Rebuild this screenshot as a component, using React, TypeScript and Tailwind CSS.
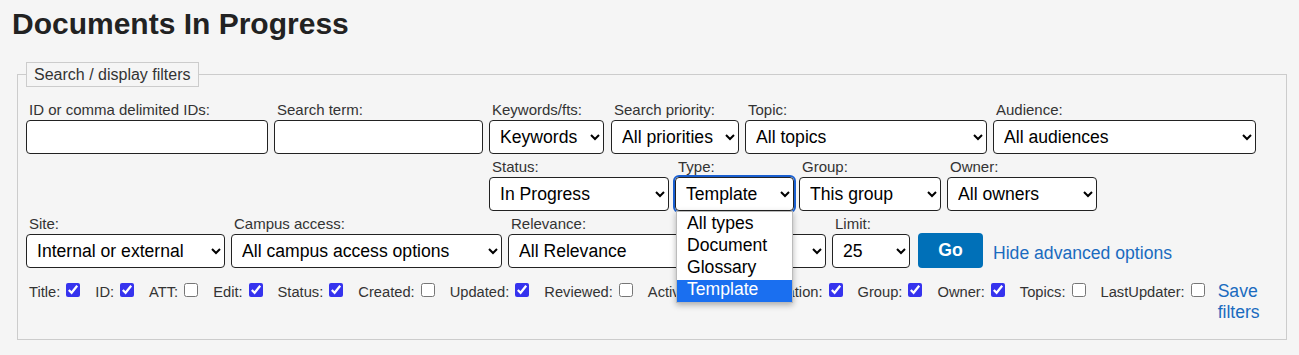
import React from "react";
import clsx from "clsx";

type FieldProps = { label: string; className?: string; children: React.ReactNode };

function Field({ label, className, children }: FieldProps) {
  return (
    <div className={clsx("flex flex-col", className)}>
      <span className="h-[20px] pl-[3px] leading-[20px] text-[15px] text-[#333] whitespace-nowrap">{label}</span>
      {children}
    </div>
  );
}

function Select({ className, options, value }: { className: string; options: string[]; value?: string }) {
  return (
    <select
      defaultValue={value ?? options[0]}
      className={clsx(
        "h-[34px] rounded-[4px] border border-[#222] bg-white pl-[6px] text-[17.6px] text-black",
        className
      )}
    >
      {options.map((o) => (
        <option key={o}>{o}</option>
      ))}
    </select>
  );
}

const columns: [string, boolean][] = [
  ["Title:", true],
  ["ID:", true],
  ["ATT:", false],
  ["Edit:", true],
  ["Status:", true],
  ["Created:", false],
  ["Updated:", true],
  ["Reviewed:", false],
  ["Active:", false],
  ["Classification:", true],
  ["Group:", true],
  ["Owner:", true],
  ["Topics:", false],
  ["LastUpdater:", false],
];

export default function App() {
  return (
    <div className="min-h-[355px] bg-[#f5f5f5] pt-[6px] font-['Liberation_Sans',Arial,sans-serif] text-[#333]">
      <h1 className="pl-[12px] text-[30px] leading-[36px] font-bold text-[#222]">Documents In Progress</h1>

      <fieldset className="mt-[20px] ml-[17px] mr-[14px] border border-[#ccc] px-[8px] pt-[13px] pb-[16px]">
        <legend className="h-[25px] border border-[#ccc] px-[7px] text-[16px] leading-[23px] text-[#333]">
          Search / display filters
        </legend>

        {/* row 1 */}
        <div className="flex gap-[6px]">
          <Field label="ID or comma delimited IDs:">
            <input className="h-[34px] w-[242px] rounded-[4px] border border-[#222] bg-white" />
          </Field>
          <Field label="Search term:">
            <input className="h-[34px] w-[209px] rounded-[4px] border border-[#222] bg-white" />
          </Field>
          <Field label="Keywords/fts:">
            <Select className="w-[115px]" options={["Keywords", "Full text"]} />
          </Field>
          <Field label="Search priority:" className="ml-[1px]">
            <Select className="w-[128px]" options={["All priorities", "High", "Low"]} />
          </Field>
          <Field label="Topic:">
            <Select className="w-[242px]" options={["All topics"]} />
          </Field>
          <Field label="Audience:">
            <Select className="w-[263px]" options={["All audiences"]} />
          </Field>
        </div>

        {/* row 2 */}
        <div className="mt-[3px] flex pl-[463px]">
          <Field label="Status:">
            <Select className="w-[180px]" options={["In Progress", "Published", "Retired"]} />
          </Field>
          <Field label="Type:" className="relative ml-[6px]">
            <Select
              className="w-[119px] outline-2 outline-[#1a5fd0]"
              options={["All types", "Document", "Glossary", "Template"]}
              value="Template"
            />
            <div className="absolute top-full left-[1px] z-10 w-[117px] border border-[#bbb] bg-white pt-[2px] text-[17.6px] text-black shadow-[0_2px_6px_rgba(0,0,0,0.3)]">
              <div className="h-[22px] pl-[10px] leading-[18px]">All types</div>
              <div className="h-[22px] pl-[10px] leading-[18px]">Document</div>
              <div className="h-[22px] pl-[10px] leading-[18px]">Glossary</div>
              <div className="h-[22px] bg-[#1a6ff0] pl-[10px] leading-[18px] text-white">Template</div>
            </div>
          </Field>
          <Field label="Group:" className="ml-[5px]">
            <Select className="w-[142px]" options={["This group", "All groups"]} />
          </Field>
          <Field label="Owner:" className="ml-[6px]">
            <Select className="w-[150px]" options={["All owners"]} />
          </Field>
        </div>

        {/* row 3 */}
        <div className="mt-[3px] flex items-end gap-[6px]">
          <Field label="Site:">
            <Select className="w-[199px]" options={["Internal or external", "Internal", "External"]} />
          </Field>
          <Field label="Campus access:">
            <Select className="w-[271px]" options={["All campus access options"]} />
          </Field>
          <Field label="Relevance:">
            <Select className="w-[318px]" options={["All Relevance"]} />
          </Field>
          <Field label="Limit:">
            <Select className="w-[78px]" options={["25", "50", "100"]} />
          </Field>
          <div className="ml-[2px] flex items-center">
            <button className="h-[35px] w-[65px] rounded-[4px] bg-[#0070b8] text-[17.6px] font-bold text-white">Go</button>
            <a className="ml-[10px] mt-[6px] text-[17.6px] text-[#1a6bbf]" href="#">
              Hide advanced options
            </a>
          </div>
        </div>

        {/* display columns */}
        <div className="mt-[13px] flex items-baseline">
          <div className="pl-[3px] text-[14.7px] whitespace-nowrap text-[#333]">
            {columns.map(([name, on]) => (
              <React.Fragment key={name}>
                <span>{name}</span>
                <input
                  type="checkbox"
                  defaultChecked={on}
                  className={clsx(
                    "mt-0 mb-[3px] ml-[6px] h-[14px] w-[14px] align-baseline accent-[#3633ee]",
                    name === "Active:" ? "mr-[20px]" : "mr-[15px]"
                  )}
                />
              </React.Fragment>
            ))}
          </div>
          <a className="ml-[-2px] w-[60px] text-[17.6px] leading-[21px] text-[#1a6bbf]" href="#">
            Save filters
          </a>
        </div>
      </fieldset>
    </div>
  );
}
